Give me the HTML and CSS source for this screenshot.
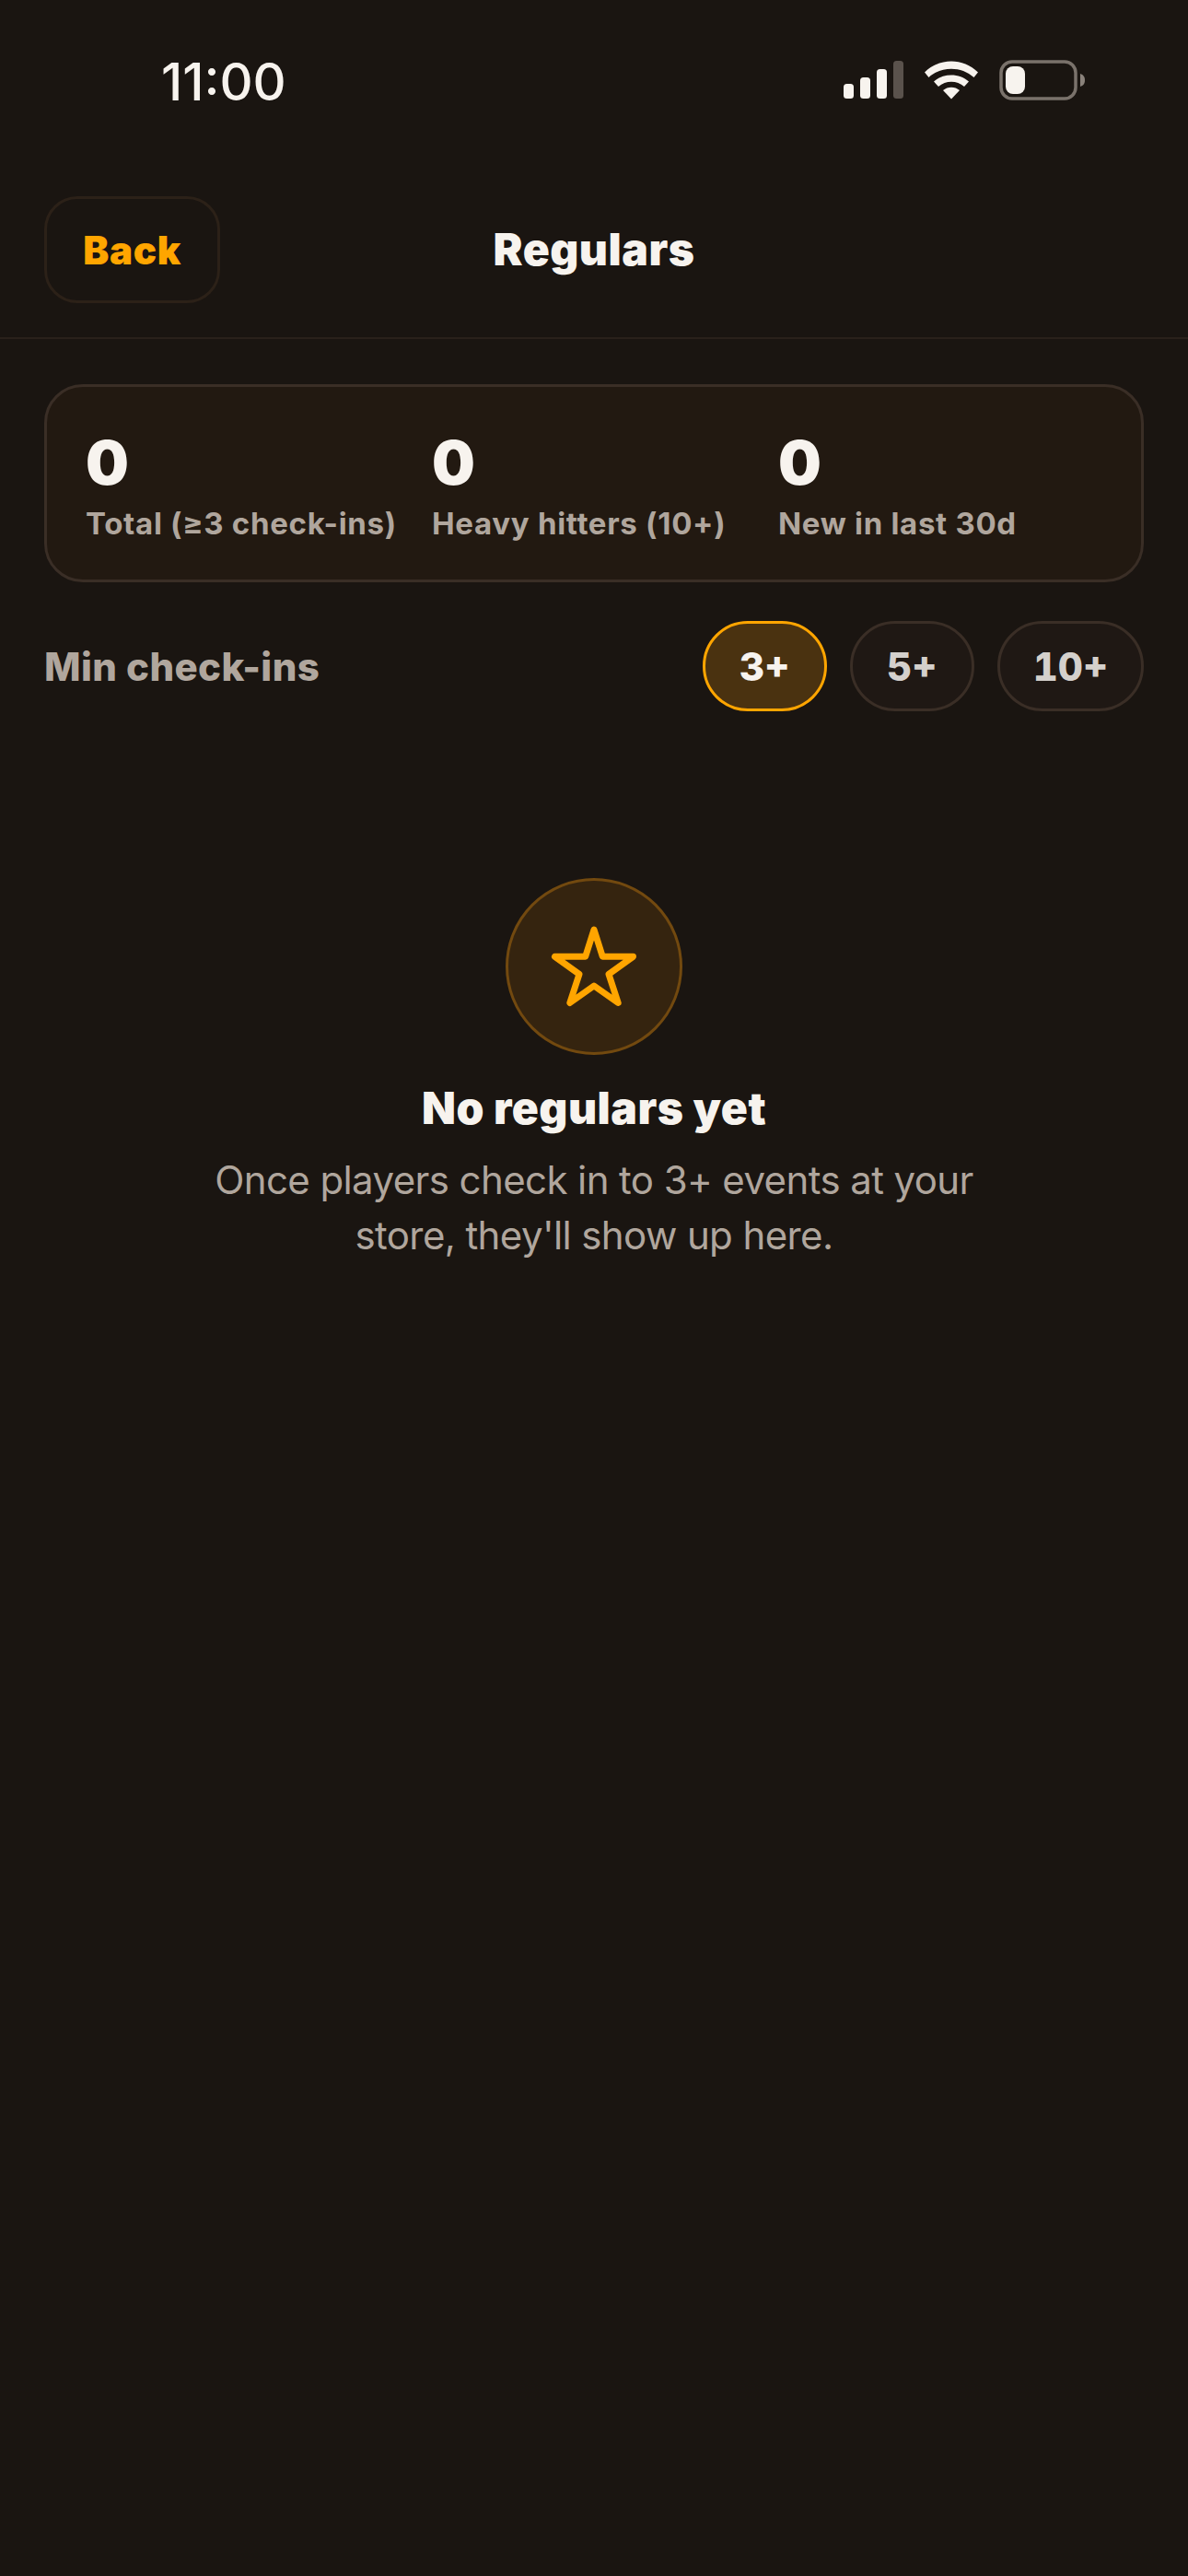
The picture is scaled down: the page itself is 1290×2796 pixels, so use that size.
FILE: index.html
```html
<!DOCTYPE html>
<html lang="en">
<head>
    <meta charset="UTF-8">
    <meta name="viewport" content="width=device-width, initial-scale=1.0">
    <title>Regulars</title>
    <link rel="stylesheet" href="styles.css">
</head>
<body>
    <div class="status-bar">
        <span class="status-time">11:00</span>
        <div class="status-icons">
            <svg class="icon-signal" width="65" height="42" viewBox="0 0 65 42">
                <rect x="0" y="25" width="11" height="16" rx="3.5" fill="#f7f3ee"/>
                <rect x="18" y="18" width="11" height="23" rx="3.5" fill="#f7f3ee"/>
                <rect x="36" y="9" width="11" height="32" rx="3.5" fill="#f7f3ee"/>
                <rect x="54" y="0" width="11" height="41" rx="3.5" fill="#5a524c"/>
            </svg>
            <svg class="icon-wifi" width="58" height="42" viewBox="0 0 58 42">
                <path d="M0 12.5 C16 -3.500 42 -3.500 58 12.500 L53.500 18 C40 5.500 18 5.500 4.500 18 Z" fill="#f7f3ee"/>
                <path d="M10 22.500 C20 13 38 13 48 22.500 L43 28 C35 21 23 21 15 28 Z" fill="#f7f3ee"/>
                <path d="M20 32 C25 27.500 33 27.500 38 32 L29 41.500 Z" fill="#f7f3ee"/>
            </svg>
            <svg class="icon-battery" width="94" height="44" viewBox="0 0 94 44">
                <rect x="2" y="2" width="81" height="40" rx="12" fill="none" stroke="#7a726b" stroke-width="3.500"/>
                <rect x="7" y="7" width="21" height="30" rx="8" fill="#f7f3ee"/>
                <path d="M88 15 C91 16 93 18 93 22 C93 26 91 28 88 29 Z" fill="#8a827b"/>
            </svg>
        </div>
    </div>

    <header class="page-header">
        <button class="back-button">Back</button>
        <h1 class="page-title">Regulars</h1>
    </header>

    <main class="content">
        <section class="stats-card">
            <div class="stat">
                <div class="stat-value">0</div>
                <div class="stat-label">Total (≥3 check-ins)</div>
            </div>
            <div class="stat">
                <div class="stat-value">0</div>
                <div class="stat-label">Heavy hitters (10+)</div>
            </div>
            <div class="stat">
                <div class="stat-value">0</div>
                <div class="stat-label">New in last 30d</div>
            </div>
        </section>

        <section class="filter-row">
            <span class="filter-label">Min check-ins</span>
            <div class="filter-pills">
                <button class="pill pill-active">3+</button>
                <button class="pill">5+</button>
                <button class="pill">10+</button>
            </div>
        </section>

        <section class="empty-state">
            <div class="empty-icon">
                <svg width="96" height="96" viewBox="0 0 96 96">
                    <path d="M48 8 L57.300 37.300 L90.500 37.300 L64 56.300 L74.200 87.500 L48 69 L21.800 87.500 L32 56.300 L5.500 37.300 L38.700 37.300 Z" fill="none" stroke="#ffa500" stroke-width="7" stroke-linejoin="round"/>
                </svg>
            </div>
            <h2 class="empty-title">No regulars yet</h2>
            <p class="empty-text">Once players check in to 3+ events at your<br>store, they'll show up here.</p>
        </section>
    </main>
</body>
</html>
```

FILE: styles.css
```css
body {
    margin: 0;
    padding: 0;
    width: 1290px;
    height: 2796px;
    overflow: hidden;
    background-color: #1a1511;
    color: #f7f3ee;
    font-family: Inter, "Noto Sans", sans-serif;
}

/* Status bar */
.status-bar {
    height: 213px;
    box-sizing: border-box;
    padding: 56px 111px 0 175px;
    display: flex;
    justify-content: space-between;
    align-items: flex-start;
}
.status-time {
    font-size: 56px;
    line-height: 66px;
    font-weight: 500;
}
.status-icons {
    display: flex;
    align-items: center;
    gap: 23px;
    margin-top: 9px;
}
.status-icons svg {
    display: block;
}

/* Header */
.page-header {
    position: relative;
    height: 155px;
    box-sizing: border-box;
    padding: 0 48px;
    border-bottom: 2px solid #2a211b;
}
.back-button {
    width: 191px;
    height: 116px;
    border: 3px solid #2c2118;
    border-radius: 36px;
    background: transparent;
    color: #ffa500;
    font-family: inherit;
    font-size: 42px;
    font-weight: 900;
    letter-spacing: 0.7px;
}
.page-title {
    position: absolute;
    top: 0;
    left: 0;
    right: 0;
    margin: 0;
    text-align: center;
    font-size: 48px;
    line-height: 116px;
    font-weight: 900;
    letter-spacing: 0.5px;
}

/* Stats */
.content {
    padding: 49px 48px 0;
}
.stats-card {
    display: grid;
    grid-template-columns: repeat(3, 1fr);
    gap: 24px;
    height: 215px;
    box-sizing: border-box;
    padding: 46px 42px 0;
    background-color: #221911;
    border: 3px solid #3a2e26;
    border-radius: 42px;
}
.stat-value {
    font-size: 66px;
    line-height: 72px;
    font-weight: 900;
}
.stat-label {
    margin-top: 9px;
    font-size: 33px;
    line-height: 42px;
    font-weight: 700;
    letter-spacing: 0.7px;
    color: #b0a69d;
}

/* Filter */
.filter-row {
    display: flex;
    justify-content: space-between;
    align-items: center;
    margin-top: 42px;
}
.filter-label {
    font-size: 42px;
    font-weight: 800;
    letter-spacing: 0.4px;
    color: #b0a69d;
}
.filter-pills {
    display: flex;
    gap: 25px;
}
.pill {
    min-width: 135px;
    height: 98px;
    padding: 0 36px;
    border: 3px solid #3a2e26;
    border-radius: 49px;
    background-color: #1f1814;
    color: #d4d0cc;
    font-family: inherit;
    font-size: 42px;
    font-weight: 800;
    font-feature-settings: "tnum";
}
.pill-active {
    border-color: #ffa500;
    background-color: #4a3210;
    color: #f7f3ee;
}

/* Empty state */
.empty-state {
    display: flex;
    flex-direction: column;
    align-items: center;
    margin-top: 181px;
}
.empty-icon {
    width: 192px;
    height: 192px;
    box-sizing: border-box;
    display: flex;
    align-items: center;
    justify-content: center;
    border: 3px solid #72490f;
    border-radius: 50%;
    background-color: #35240f;
}
.empty-title {
    margin: 28px 0 0;
    font-size: 48px;
    line-height: 60px;
    font-weight: 900;
    letter-spacing: 0.5px;
}
.empty-text {
    margin: 18px 0 0;
    text-align: center;
    font-size: 42px;
    line-height: 60px;
    letter-spacing: -0.6px;
    color: #b0a69d;
}
```
